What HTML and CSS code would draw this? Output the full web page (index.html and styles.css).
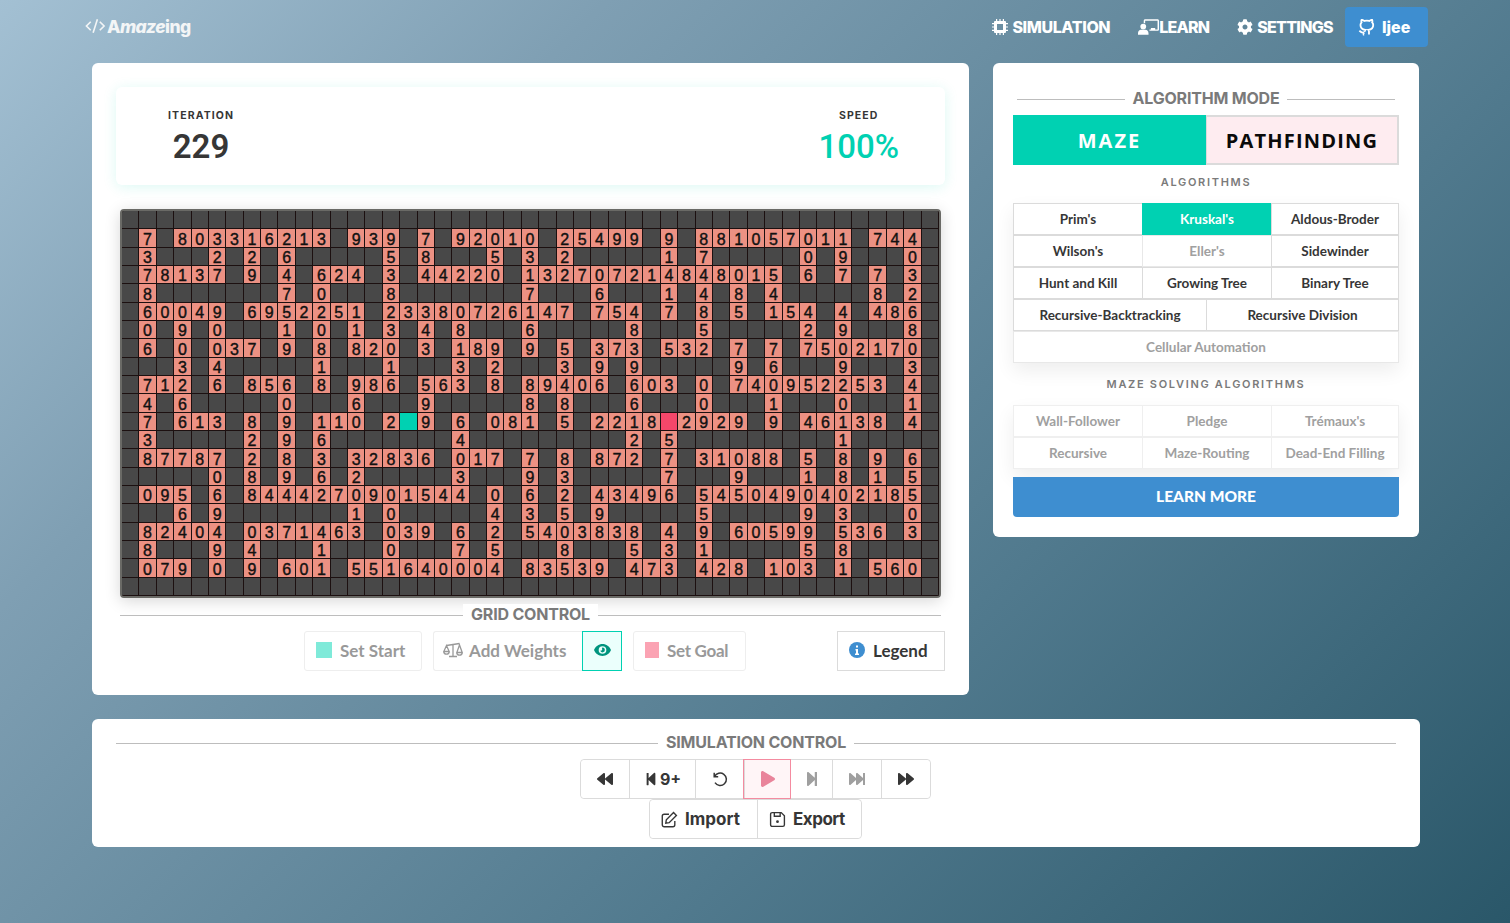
FILE: index.html
```html
<!DOCTYPE html>
<html lang="en">
<head>
<meta charset="utf-8">
<title>Amazeing</title>
<link rel="stylesheet" href="styles.css">
</head>
<body>
<nav class="navbar">
  <a class="brand"><svg class="brand-code" viewBox="0 0 22 16"><path d="M6 3.500 1.500 8 6 12.500M8.500 15 13 1M15.500 3.500 20 8l-4.500 4.500"/></svg><span class="brand-text">A<em>maze</em>ing</span></a>
  <div class="nav-items">
    <a class="nav-item"><svg class="nav-icon" viewBox="0 0 16 16"><path d="M3 2h10a1 1 0 0 1 1 1v10a1 1 0 0 1-1 1H3a1 1 0 0 1-1-1V3a1 1 0 0 1 1-1zM5 5v6h6V5zM4 0h1.200v2H4zM7.400 0h1.200v2H7.400zM10.800 0H12v2h-1.200zM4 14h1.200v2H4zM7.400 14h1.200v2H7.400zM10.800 14H12v2h-1.200zM0 4h2v1.200H0zM0 7.400h2v1.200H0zM0 10.800h2V12H0zM14 4h2v1.200h-2zM14 7.400h2v1.200h-2zM14 10.800h2V12h-2z" fill-rule="evenodd"/></svg>SIMULATION</a>
    <a class="nav-item nav-learn"><svg class="nav-icon wide" viewBox="0 0 22 16"><circle cx="5.500" cy="7.500" r="3"/><path d="M0 16v-1.500C0 12.500 1.500 11 3 11h5c1.500 0 3 1.500 3 3.500V16zM6 1.500C6 .7 6.700 0 7.500 0h13c.8 0 1.500.7 1.500 1.500v9c0 .8-.7 1.500-1.500 1.500H12v-1.500h8.500v-9h-13V4H6zM13.500 9h4.500v1.500h-4.500z"/></svg>LEARN</a>
    <a class="nav-item nav-settings"><svg class="nav-icon" viewBox="0 0 512 512"><path d="M487.400 315.700l-42.600-24.600c4.300-23.200 4.300-47 0-70.200l42.600-24.600c4.900-2.800 7.100-8.600 5.500-14-11.100-35.600-30-67.800-54.700-94.600-3.800-4.100-10-5.100-14.800-2.300L380.800 110c-17.900-15.400-38.500-27.300-60.800-35.100V25.800c0-5.600-3.900-10.500-9.400-11.700-36.700-8.200-74.300-7.800-109.200 0-5.500 1.200-9.400 6.100-9.400 11.700V75c-22.200 7.900-42.800 19.800-60.800 35.100L88.700 85.500c-4.900-2.800-11-1.900-14.800 2.300-24.700 26.700-43.600 58.900-54.700 94.600-1.700 5.400.6 11.200 5.500 14L67.300 221c-4.300 23.200-4.300 47 0 70.200l-42.600 24.600c-4.900 2.800-7.100 8.600-5.500 14 11.100 35.600 30 67.800 54.700 94.600 3.800 4.100 10 5.100 14.800 2.300l42.600-24.600c17.900 15.400 38.500 27.300 60.800 35.100v49.200c0 5.600 3.900 10.500 9.400 11.700 36.700 8.200 74.300 7.800 109.200 0 5.500-1.200 9.400-6.100 9.400-11.700v-49.200c22.200-7.900 42.800-19.800 60.800-35.100l42.600 24.600c4.900 2.800 11 1.900 14.800-2.300 24.700-26.700 43.600-58.900 54.700-94.600 1.500-5.500-.7-11.300-5.600-14.100zM256 336c-44.100 0-80-35.900-80-80s35.900-80 80-80 80 35.900 80 80-35.900 80-80 80z"/></svg>SETTINGS</a>
    <a class="github"><svg class="gh-icon" viewBox="0 0 24 24"><path d="M8.500 22c-1 .3-.5-.1-.5-.1v-2.800M15.500 22v-3.900a3.400 3.400 0 0 0-.9-2.600c3.100-.4 6.900-1.400 6.900-7a5.400 5.400 0 0 0-1.500-3.700 5 5 0 0 0-.1-3.600S18.700.9 16 2.700a13.400 13.400 0 0 0-7 0C6.300.9 5.100 1.200 5.100 1.200A5 5 0 0 0 5 4.800a5.400 5.400 0 0 0-1.500 3.700c0 5.600 3.800 6.600 6.900 7a3.400 3.400 0 0 0-.9 2.600M8.500 19c-4 1.200-5-1-6.500-2.500"/></svg>Ijee</a>
  </div>
</nav>

<main class="layout">
  <section class="card grid-card">
    <div class="stats">
      <div class="stat"><p class="stat-label">ITERATION</p><p class="stat-value">229</p></div>
      <div class="stat"><p class="stat-label">SPEED</p><p class="stat-value teal">100%</p></div>
    </div>
    <div class="board" id="board"></div>
    <div class="divider board-divider"><span>GRID CONTROL</span></div>
    <div class="grid-controls">
      <div class="tools">
        <button class="btn soft tool-start"><i class="swatch swatch-start"></i>Set Start</button>
        <div class="joined">
          <button class="btn soft tool-weights"><svg class="btn-icon scale" viewBox="0 0 20 16"><path d="M10 2v12.500M6 14.500h8M3.500 3.500l6.500-1 6.500-1M3.500 3.500.8 9.500h5.400zM16.500 3l-2.700 7.500h5.400zM.8 9.500a2.700 2.700 0 0 0 5.400 0M13.800 10.500a2.700 2.700 0 0 0 5.400 0"/></svg>Add Weights</button>
          <button class="btn eye"><svg class="eye-icon" viewBox="0 0 20 14"><path fill-rule="evenodd" d="M10 0c4.500 0 8.300 2.900 10 7-1.700 4.100-5.500 7-10 7S1.700 11.100 0 7c1.700-4.100 5.500-7 10-7zm0 2.500a4.500 4.500 0 1 0 0 9 4.500 4.500 0 0 0 0-9zm0 1.700a2.800 2.800 0 1 1-2.700 3.500c.9.400 2-.1 2.300-1 .2-.6.100-1.300-.3-1.800.2-.5.400-.7.700-.7z"/></svg></button>
        </div>
        <button class="btn soft tool-goal"><i class="swatch swatch-goal"></i>Set Goal</button>
      </div>
      <button class="btn legend"><svg class="info-icon" viewBox="0 0 16 16"><circle cx="8" cy="8" r="8"/><path class="info-i" d="M7 3.500h2v2H7zM6.500 7h2.500v4.500h1V13H6v-1.500h1V8.500h-.5z"/></svg>Legend</button>
    </div>
  </section>

  <aside class="card mode-card">
    <div class="divider mode-divider"><span>ALGORITHM MODE</span></div>
    <div class="mode-switch">
      <button class="mode-btn mode-active">MAZE</button>
      <button class="mode-btn mode-idle">PATHFINDING</button>
    </div>
    <h3 class="subhead first">ALGORITHMS</h3>
    <div class="algo-group">
      <div class="algo-row row3"><button class="algo">Prim's</button><button class="algo active">Kruskal's</button><button class="algo">Aldous-Broder</button></div>
      <div class="algo-row row3"><button class="algo">Wilson's</button><button class="algo off">Eller's</button><button class="algo">Sidewinder</button></div>
      <div class="algo-row row3"><button class="algo">Hunt and Kill</button><button class="algo">Growing Tree</button><button class="algo">Binary Tree</button></div>
      <div class="algo-row row2"><button class="algo">Recursive-Backtracking</button><button class="algo">Recursive Division</button></div>
      <div class="algo-row"><button class="algo off">Cellular Automation</button></div>
    </div>
    <h3 class="subhead">MAZE SOLVING ALGORITHMS</h3>
    <div class="algo-group light">
      <div class="algo-row row3"><button class="algo off">Wall-Follower</button><button class="algo off">Pledge</button><button class="algo off">Trémaux's</button></div>
      <div class="algo-row row3"><button class="algo off">Recursive</button><button class="algo off">Maze-Routing</button><button class="algo off">Dead-End Filling</button></div>
    </div>
    <button class="learn-more">LEARN MORE</button>
  </aside>

  <section class="card sim-card">
    <div class="divider sim-divider"><span>SIMULATION CONTROL</span></div>
    <div class="sim-row">
      <div class="btn-group">
        <button class="ctl c48"><svg class="ctl-icon" viewBox="0 0 512 512"><path d="M11.500 280.600l192 160c20.600 17.200 52.500 2.800 52.500-24.600V96c0-27.400-31.900-41.800-52.500-24.600l-192 160c-15.300 12.800-15.300 36.400 0 49.200zm256 0l192 160c20.600 17.200 52.500 2.800 52.500-24.600V96c0-27.400-31.900-41.800-52.500-24.600l-192 160c-15.300 12.800-15.300 36.400 0 49.200z"/></svg></button>
        <button class="ctl c66"><svg class="ctl-icon step" viewBox="0 0 448 512"><path d="M64 468V44c0-6.600 5.400-12 12-12h48c6.600 0 12 5.400 12 12v176.400l195.500-181C352.100 22.300 384 36.600 384 64v384c0 27.400-31.900 41.700-52.500 24.600L136 292.700V468c0 6.600-5.400 12-12 12H76c-6.600 0-12-5.400-12-12z"/></svg>9+</button>
        <button class="ctl c49"><svg class="undo-icon" viewBox="0 0 16 16"><path d="M2.200 1.800v4h4M2.600 5.600A6.200 6.200 0 1 1 3 11.700"/></svg></button>
        <button class="ctl c46 playing"><svg class="ctl-icon play" viewBox="0 0 448 512"><path d="M424.400 214.700L72.400 6.600C43.800-10.300 0 6.100 0 47.900V464c0 37.500 40.700 60.100 72.400 41.300l352-208c31.400-18.500 31.500-64.100 0-82.600z"/></svg></button>
        <button class="ctl c42 dim"><svg class="ctl-icon" viewBox="0 0 448 512"><path d="M384 44v424c0 6.600-5.400 12-12 12h-48c-6.600 0-12-5.400-12-12V291.600l-195.500 181C95.900 489.700 64 475.400 64 448V64c0-27.400 31.900-41.700 52.500-24.600L312 219.300V44c0-6.600 5.400-12 12-12h48c6.600 0 12 5.400 12 12z"/></svg></button>
        <button class="ctl c49 dim"><svg class="ctl-icon" viewBox="0 0 512 512"><path d="M512 76v360c0 6.600-5.400 12-12 12h-40c-6.600 0-12-5.400-12-12V284.100L276.500 440.600c-20.600 17.200-52.500 2.800-52.500-24.600V284.100L52.500 440.600C31.900 457.800 0 443.400 0 416V96c0-27.400 31.900-41.700 52.500-24.600L224 226.800V96c0-27.400 31.900-41.700 52.500-24.600L448 226.800V76c0-6.600 5.400-12 12-12h40c6.600 0 12 5.400 12 12z"/></svg></button>
        <button class="ctl c49"><svg class="ctl-icon" viewBox="0 0 512 512"><path d="M500.500 231.400l-192-160C287.900 54.300 256 68.600 256 96v320c0 27.400 31.900 41.800 52.500 24.600l192-160c15.300-12.800 15.300-36.400 0-49.200zm-256 0l-192-160C31.900 54.300 0 68.600 0 96v320c0 27.400 31.900 41.800 52.500 24.600l192-160c15.300-12.800 15.300-36.400 0-49.200z"/></svg></button>
      </div>
      <div class="btn-group">
        <button class="ctl c107 txt"><svg class="line-icon" viewBox="0 0 16 16"><path d="M13 9.500V13a1.800 1.800 0 0 1-1.800 1.800H3A1.800 1.800 0 0 1 1.200 13V4.800A1.800 1.800 0 0 1 3 3h4.500M11.800 1.500l2.700 2.700-6.800 6.800-3.200.5.500-3.200z"/></svg>Import</button>
        <button class="ctl c104 txt txt-export"><svg class="line-icon" viewBox="0 0 16 16"><path d="M3 1.500h8.500l3 3V13a1.500 1.500 0 0 1-1.500 1.500H3A1.500 1.500 0 0 1 1.500 13V3A1.500 1.500 0 0 1 3 1.500zM5 1.500v3.500h5.500V1.500"/><circle class="dot" cx="8" cy="10" r="1.300"/></svg>Export</button>
      </div>
    </div>
  </section>
</main>
<script src="board.js"></script>
</body>
</html>
```

FILE: styles.css
```css
* { box-sizing: border-box; }
html, body { margin: 0; height: 100%; }
body {
  width: 1510px;
  height: 923px;
  overflow: hidden;
  background: linear-gradient(135deg, #a3c0d3 0%, #7f9fb3 25%, #517a8e 65%, #2a5769 100%);
  font-family: "Lato", "Open Sans", sans-serif;
  color: #363636;
}
button { font-family: inherit; cursor: pointer; margin: 0; }
p, h3 { margin: 0; }

/* navbar */
.navbar { height: 63px; display: flex; justify-content: space-between; padding: 7px 82px 0 85px; }
.brand { display: flex; align-items: center; height: 38px; color: #f3f5f6; }
.brand-code { width: 21px; height: 16px; fill: none; stroke: #f3f5f6; stroke-width: 1.7; }
.brand-text { font: 800 17.500px "Inter", sans-serif; letter-spacing: -.6px; margin-left: 1px; }
.brand-text em { font-style: italic; }
.nav-items { display: flex; align-items: stretch; height: 40px; }
.nav-item { display: flex; align-items: center; color: #fff; font: 800 16px "Inter", sans-serif; letter-spacing: -.4px; padding: 0 12px 0 16px; }
.nav-learn { letter-spacing: -.8px; }
.nav-settings { letter-spacing: -.7px; }
.nav-item:first-child { padding-left: 0; }
.nav-icon { width: 16px; height: 16px; fill: #fff; margin-right: 4px; }
.nav-icon.wide { width: 21px; margin-right: 0; }
.github { display: flex; align-items: center; width: 83px; padding-left: 13px; background: #3e8ed0; border-radius: 4px; color: #fff; font: 800 16px "Inter", sans-serif; }
.gh-icon { width: 17px; height: 17px; fill: none; stroke: #fff; stroke-width: 2.600; margin-right: 7px; }

/* layout */
.layout { display: grid; grid-template-columns: 877px 427px; grid-template-rows: 632px 128px; column-gap: 24px; row-gap: 24px; padding-left: 92px; align-items: start; }
.card { background: #fff; border-radius: 6px; padding: 24px; }
.grid-card { height: 632px; }
.mode-card { width: 426px; height: 474px; padding: 20px; }
.sim-card { grid-column: 1 / 3; width: 1328px; height: 128px; padding: 13px 24px 8px; }

/* stats */
.stats { display: flex; justify-content: space-between; height: 98px; padding: 23px 46px 0 52px; border-radius: 6px; background: #fff; box-shadow: 0 2px 14px rgba(0, 209, 178, .14); }
.stat { display: flex; flex-direction: column; align-items: center; }
.stat-label { font: 700 10.500px/12px "Inter", sans-serif; letter-spacing: 1.100px; color: #363636; }
.stat-value { font: 600 33px/38px "Roboto", sans-serif; color: #363636; margin-top: 6px; }
.stat-value.teal { color: #00d1b2; font-weight: 500; }

/* board */
.board {
  margin: 24px 4px 0;
  height: 389px;
  display: grid;
  grid-template-columns: repeat(47, 1fr);
  grid-template-rows: repeat(21, 1fr);
  border: 2px solid #6a6a66;
  border-radius: 4px;
  box-shadow: 0 3px 16px rgba(0, 0, 0, .16);
  background: #1c1010;
  overflow: hidden;
}
.cell { border-right: 1px solid #1c1010; border-bottom: 1px solid #1c1010; display: flex; align-items: center; justify-content: center; padding-top: 3px; font: 400 16px/1 "Liberation Sans", Arial, sans-serif; -webkit-text-stroke: .4px #111; color: #111; min-width: 0; min-height: 0; }
.wall { background: #484848; }
.path { background: #ec9183; }
.start { background: #00d1b2; }
.goal { background: #f5476a; }

/* dividers */
.divider { display: flex; align-items: center; font: 700 16px/20px "Inter", sans-serif; color: #7a7a7a; letter-spacing: -.2px; }
.divider::before, .divider::after { content: ""; flex: 1; height: 1px; background: #bdbdbd; }
.divider span { padding: 0 8px 2px; background: #fff; position: relative; }
.board-divider { margin: 6px 4px 0; }
.mode-divider { margin: 5px 4px 5px; }
.sim-divider { margin-bottom: 5px; }

/* grid controls */
.grid-controls { position: relative; display: flex; justify-content: flex-end; margin-top: 5px; height: 40px; }
.tools { position: absolute; left: 188px; top: 0; display: flex; gap: 11px; }
.btn { height: 40px; display: flex; align-items: center; font-size: 17px; font-weight: 700; background: #fff; border: 1px solid #dbdbdb; padding: 0 0 2px; }
.btn.soft { border-color: #eee; border-radius: 3px; color: #999; }
.swatch { width: 16px; height: 16px; display: block; margin-right: 8px; }
.swatch-start { background: #7fead9; }
.swatch-goal { background: #fba3b3; width: 14px; }
.tool-start { width: 118px; padding-left: 11px; }
.tool-goal { width: 113px; padding-left: 11px; letter-spacing: -.3px; }
.tool-weights { width: 149px; padding-left: 9px; border-right: 0 !important; border-radius: 3px 0 0 3px !important; }
.joined { display: flex; }
.scale { width: 20px; height: 16px; fill: none; stroke: #999; stroke-width: 1.300; margin-right: 6px; }
.eye { width: 40px; justify-content: center; background: #ebfffc; border-color: #00d1b2; }
.eye-icon { width: 17px; height: 12px; fill: #00947e; }
.legend { width: 108px; padding-left: 11px; color: #363636; border-color: #dbdbdb; }
.info-icon { width: 16px; height: 16px; fill: #3e8ed0; margin-right: 8px; }
.info-i { fill: #fff; }

/* mode */
.mode-switch { display: grid; grid-template-columns: 193px 193px; height: 50px; }
.mode-btn { font: 700 20px "Open Sans", sans-serif; letter-spacing: 2px; border: 2px solid #dbdbdb; padding: 0; }
.mode-active { background: #00d1b2; border: 0; color: #fff; }
.mode-idle { background: #feecf0; color: #0a0a0a; border-left-width: 1px; letter-spacing: 1.200px; }
.subhead { text-align: center; font: 600 11px/14px "Inter", sans-serif; letter-spacing: 1.700px; color: #7a7a7a; margin: 14px 0 14px; }
.subhead.first { margin: 10px 0 14px; }
.algo-group { box-shadow: 0 8px 18px rgba(0, 0, 0, .07); }
.algo-row { display: grid; grid-template-columns: 1fr; height: 32px; }
.algo-row.row3 { grid-template-columns: 129px 129px 128px; }
.algo-row.row2 { grid-template-columns: 193px 193px; }
.algo { background: #fff; border: 1px solid #dbdbdb; border-left-width: 0; font-size: 13.500px; font-weight: 700; color: #363636; padding: 0 0 1px; margin: 0; }
.algo:not(:first-child) { border-left-width: 1px; border-right-width: 0; }
.algo:first-child { border-left-width: 1px; border-right-width: 0; }
.algo:last-child { border-right-width: 1px; }
.algo.off { color: #a0a0a0; border-color: #e8e8e8; }
.algo.active { background: #00d1b2; border-color: #00d1b2; color: #fff; }
.light .algo { border-color: #efefef; }
.learn-more { display: block; width: 100%; height: 40px; margin-top: 8px; background: #3e8ed0; border: 0; border-radius: 0 0 4px 4px; color: #fff; font-size: 15.500px; font-weight: 900; padding: 0 0 2px; }

/* simulation */
.sim-row { display: flex; flex-direction: column; align-items: center; padding-right: 1px; }
.btn-group { display: flex; height: 40px; border: 1px solid #dbdbdb; border-radius: 4px; }
.ctl { height: 38px; background: #fff; border: 0; border-left: 1px solid #dbdbdb; display: flex; align-items: center; justify-content: center; padding: 0; font: 700 16px "Inter", sans-serif; color: #363636; }
.ctl:first-child { border-left: 0; border-radius: 4px 0 0 4px; }
.ctl:last-child { border-radius: 0 4px 4px 0; }
.c48 { width: 48px; } .c49 { width: 49px; } .c66 { width: 66px; } .c46 { width: 46px; } .c42 { width: 42px; } .c107 { width: 107px; } .c104 { width: 104px; }
.ctl-icon { width: 16px; height: 16px; fill: #363636; }
.ctl-icon.step { width: 14px; height: 14px; margin-right: 2px; }
.undo-icon { width: 16px; height: 16px; fill: none; stroke: #363636; stroke-width: 1.500; }
.playing { background: #fff5f7; outline: 1px solid #f48ba0; z-index: 1; }
.ctl-icon.play { fill: #e9849b; }
.dim .ctl-icon { fill: #9f9f9f; }
.txt { font-size: 17px; justify-content: flex-start; padding-left: 11px; }
.txt-export { letter-spacing: -.5px; }
.line-icon { width: 17px; height: 17px; fill: none; stroke: #363636; stroke-width: 1.300; margin-right: 7px; }
.dot { fill: #363636; stroke: none; }
```

FILE: board.js
```js
var rows = [
  "...............................................",
  ".7.803316213.939.7.92010.25499.9.881057011.744.",
  ".3...2.2.6.....5.8...5.3.2.....1.7.....0.9...0.",
  ".78137.9.4.624.3.44220.132707214848015.6.7.7.3.",
  ".8.......7.0...8.......7...6...1.4.8.4.....8.2.",
  ".60049.6952251.23380726147.754.7.8.5.154.4.486.",
  ".0.9.0...1.0.1.3.4.8...6.....8...5.....2.9...8.",
  ".6.0.037.9.8.820.3.189.9.5.373.532.7.7.7502170.",
  "...3.4.....1...1...3.2...3.9.9.....9.6...9...3.",
  ".712.6.856.8.986.563.8.89406.603.0.740952253.4.",
  ".4.6.....0...6...9.....8.8...6...0...1...0...1.",
  ".7.613.8.9.110.2S9.6.081.5.2218G2929.9.46138.4.",
  ".3.....2.9.6.......4.........2.5.........1.....",
  ".87787.2.8.3.32836.017.7.8.872.7.31088.5.8.9.6.",
  ".....0.8.9.6.2.....3...9.3.....7...9...1.8.1.5.",
  ".095.6.8444270901544.0.6.2.43496.5450490402185.",
  "...6.9.......1.0.....4.3.5.9.....5.....9.3...0.",
  ".82404.0371463.039.6.2.5403838.4.9.60599.536.3.",
  ".8...9.4...1...0...7.5...8...5.3.1.....5.8.....",
  ".079.0.9.601.551640004.83539.473.428.103.1.560.",
  "..............................................."
];
var board = document.getElementById("board");
rows.forEach(function (row) {
  row.split("").forEach(function (ch) {
    var cell = document.createElement("div");
    if (ch === ".") {
      cell.className = "cell wall";
    } else if (ch === "S") {
      cell.className = "cell start";
    } else if (ch === "G") {
      cell.className = "cell goal";
    } else {
      cell.className = "cell path";
      cell.textContent = ch;
    }
    board.appendChild(cell);
  });
});
```
